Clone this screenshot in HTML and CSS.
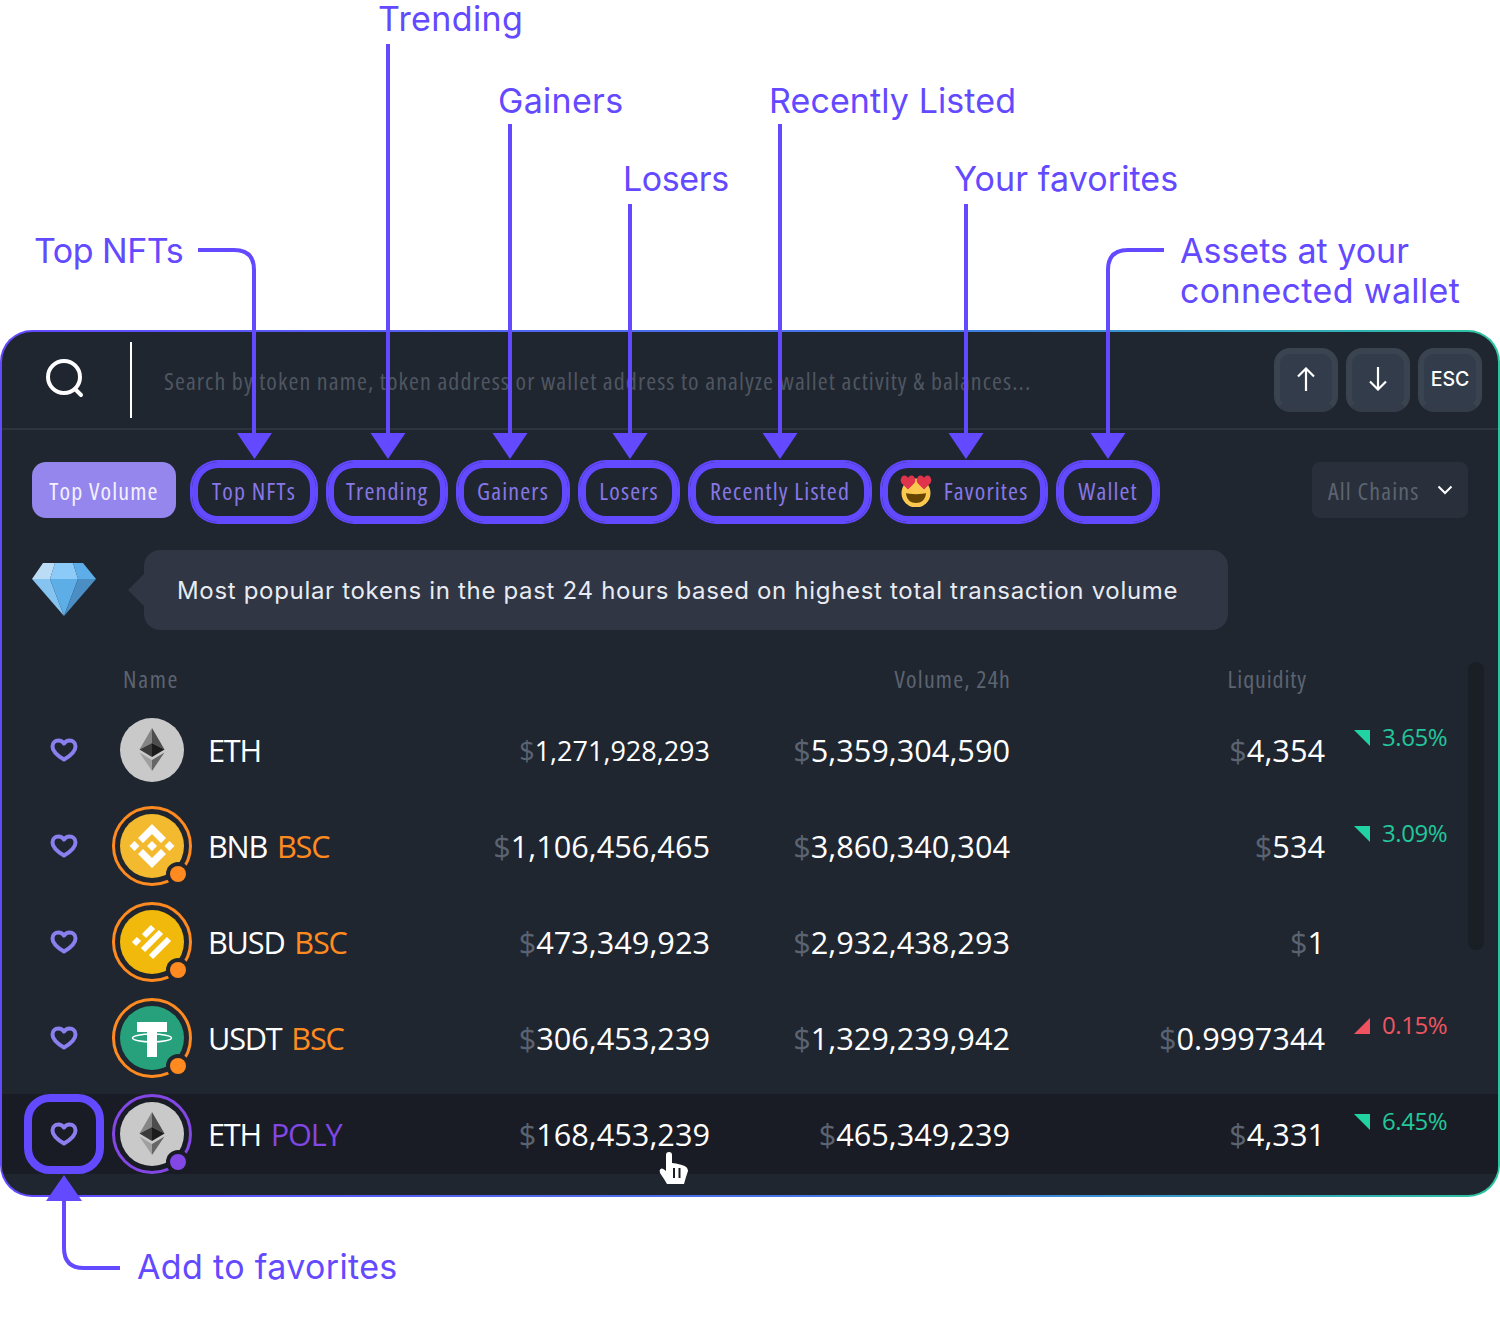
FILE: index.html
```html
<!doctype html>
<html>
<head>
<meta http-equiv="Content-Type" content="text/html; charset=utf-8"/>
<title>Token search</title>
<link rel="stylesheet" href="styles.css">
</head>
<body>

<svg class="defs" width="0" height="0">
	<symbol id="heart" viewBox="0 0 28 24">
		<path d="M14 21.500C8 18 2.500 14 2.500 8.500 2.500 5 5 2.500 8.500 2.500c2.300 0 4.200 1.100 5.500 3 1.300-1.900 3.200-3 5.500-3 3.500 0 6 2.500 6 6 0 5.500-5.500 9.500-11.500 13z" fill="none" stroke="#8b7eee" stroke-width="4" stroke-linejoin="round"/>
	</symbol>
	<symbol id="eth" viewBox="0 0 64 64">
		<circle cx="32" cy="32" r="32" fill="#c9c9c9"/>
		<path d="M32 10 19.500 31.500 32 25z" fill="#858585"/>
		<path d="M32 10 44.500 31.500 32 25z" fill="#4d4d4d"/>
		<path d="M19.500 31.500 32 25v14z" fill="#3b3b3b"/>
		<path d="M44.500 31.500 32 25v14z" fill="#1b1b1b"/>
		<path d="M19.500 34.500 32 42v11z" fill="#a0a0a0"/>
		<path d="M44.500 34.500 32 42v11z" fill="#666"/>
	</symbol>
</svg>

<div class="panel">
	<div class="search">
		<svg class="search-icon" width="40" height="40" viewBox="0 0 40 40"><circle cx="19" cy="18" r="16" fill="none" stroke="#fff" stroke-width="4"/><path d="M30 30l6 6" stroke="#fff" stroke-width="4" stroke-linecap="round"/></svg>
		<span class="caret"></span>
		<span class="placeholder">Search by token name, token address or wallet address to analyze wallet activity &amp; balances...</span>
		<div class="keys">
			<span class="key"><svg width="18" height="24" viewBox="0 0 18 24"><path d="M9 24V1.500M1 9.500 9 1.500l8 8" fill="none" stroke="#fff" stroke-width="2.200"/></svg></span>
			<span class="key"><svg width="18" height="24" viewBox="0 0 18 24"><path d="M9 0v22.500M1 14.500l8 8 8-8" fill="none" stroke="#fff" stroke-width="2.200"/></svg></span>
			<span class="key key-esc">ESC</span>
		</div>
	</div>

	<div class="tabs">
		<span class="tab tab-on">Top Volume</span>
		<span class="tab ring tab-nfts">Top NFTs</span>
		<span class="tab ring tab-trending">Trending</span>
		<span class="tab ring tab-gainers">Gainers</span>
		<span class="tab ring tab-losers">Losers</span>
		<span class="tab ring tab-recent">Recently Listed</span>
		<span class="tab ring tab-fav">
			<svg width="32" height="32" viewBox="0 0 32 32"><circle cx="16" cy="18" r="14.500" fill="#fbc94f"/><path d="M6 18c3 1.500 17 1.500 20 0-.5 7-5 10-10 10S6.500 25 6 18z" fill="#664500"/><path d="M8 14.500 1.500 8C-.500 5 1.500 .5 4.500 .5 6 .5 7.500 1.500 8 3c.5-1.500 2-2.500 3.500-2.500 3 0 5 4.500 3 7.500z" fill="#e0334c"/><path d="M24 14.500 17.500 8c-2-3 0-7.500 3-7.500 1.500 0 3 1 3.500 2.500.5-1.500 2-2.500 3.500-2.500 3 0 5 4.500 3 7.500z" fill="#e0334c"/></svg>
			Favorites
		</span>
		<span class="tab ring tab-wallet">Wallet</span>
		<span class="chains">All Chains
			<svg width="16" height="10" viewBox="0 0 16 10"><path d="M1.500 1.500 8 8l6.500-6.500" fill="none" stroke="#fff" stroke-width="2"/></svg>
		</span>
	</div>

	<div class="banner">
		<svg width="64" height="54" viewBox="0 0 64 54">
			<path d="M11 0h12l-5 16H0z" fill="#bbdcf5"/>
			<path d="M23 0h18l5 16H18z" fill="#8ccbf7"/>
			<path d="M41 0h10l13 16H46z" fill="#5daee8"/>
			<path d="M0 16h18l14 37z" fill="#85c4f0"/>
			<path d="M18 16h28L32 53z" fill="#5dade7"/>
			<path d="M46 16h18L32 53z" fill="#4a8ec4"/>
		</svg>
		<div class="bubble">Most popular tokens in the past 24 hours based on highest total transaction volume</div>
	</div>

	<div class="thead">
		<span class="th-name">Name</span>
		<span class="th-vol">Volume, 24h</span>
		<span class="th-liq">Liquidity</span>
	</div>

	<div class="row">
		<span class="fav"><svg width="28" height="24"><use href="#heart"/></svg></span>
		<span class="coin"><svg width="64" height="64"><use href="#eth"/></svg></span>
		<span class="name">ETH</span>
		<span class="num num-sm"><i>$</i>1,271,928,293</span>
		<span class="num"><i>$</i>5,359,304,590</span>
		<span class="num"><i>$</i>4,354</span>
		<span class="chg up"><b></b>3.65%</span>
	</div>
	<div class="row">
		<span class="fav"><svg width="28" height="24"><use href="#heart"/></svg></span>
		<span class="coin on-bsc"><svg width="64" height="64" viewBox="0 0 64 64"><circle cx="32" cy="32" r="32" fill="#f3ba2f"/><path d="M32 10 46 24 41 29 32 20 23 29 18 24zM32 54 46 40 41 35 32 44 23 35 18 40zM32 27 37 32 32 37 27 32zM9.500 32 14.500 27 19.500 32 14.500 37zM44.500 32 49.500 27 54.500 32 49.500 37z" fill="#fff"/></svg></span>
		<span class="name">BNB <em class="bsc">BSC</em></span>
		<span class="num"><i>$</i>1,106,456,465</span>
		<span class="num"><i>$</i>3,860,340,304</span>
		<span class="num"><i>$</i>534</span>
		<span class="chg up"><b></b>3.09%</span>
	</div>
	<div class="row">
		<span class="fav"><svg width="28" height="24"><use href="#heart"/></svg></span>
		<span class="coin on-bsc"><svg width="64" height="64" viewBox="0 0 64 64"><circle cx="32" cy="32" r="32" fill="#f0b90b"/><path d="M24 26l9-9M23 40l18-18M31 47l18-18M14 34l5-5" stroke="#fff" stroke-width="6" fill="none"/></svg></span>
		<span class="name">BUSD <em class="bsc">BSC</em></span>
		<span class="num"><i>$</i>473,349,923</span>
		<span class="num"><i>$</i>2,932,438,293</span>
		<span class="num"><i>$</i>1</span>
		<span class="chg"></span>
	</div>
	<div class="row">
		<span class="fav"><svg width="28" height="24"><use href="#heart"/></svg></span>
		<span class="coin on-bsc"><svg width="64" height="64" viewBox="0 0 64 64"><circle cx="32" cy="32" r="32" fill="#26a17b"/><path d="M17 16h30v10H37v25H27V26H17z" fill="#fff"/><ellipse cx="32" cy="32" rx="19.500" ry="4" fill="none" stroke="#fff" stroke-width="1.500"/></svg></span>
		<span class="name">USDT <em class="bsc">BSC</em></span>
		<span class="num"><i>$</i>306,453,239</span>
		<span class="num"><i>$</i>1,329,239,942</span>
		<span class="num"><i>$</i>0.9997344</span>
		<span class="chg down"><b></b>0.15%</span>
	</div>
	<div class="row row-hover">
		<span class="fav"><svg width="28" height="24"><use href="#heart"/></svg></span>
		<span class="coin on-poly"><svg width="64" height="64"><use href="#eth"/></svg></span>
		<span class="name">ETH <em class="poly">POLY</em></span>
		<span class="num"><i>$</i>168,453,239</span>
		<span class="num"><i>$</i>465,349,239</span>
		<span class="num"><i>$</i>4,331</span>
		<span class="chg up"><b></b>6.45%</span>
	</div>

	<span class="scrollbar"></span>
</div>

<!-- callouts drawn over the panel -->
<div class="notes">
	<svg class="lines" width="1500" height="1318" viewBox="0 0 1500 1318">
		<g fill="none" stroke="#6349ff" stroke-width="4">
			<path d="M198 250h36q20 0 20 20v165"/>
			<path d="M388 44v391"/>
			<path d="M510 124v311"/>
			<path d="M630 204v231"/>
			<path d="M780 124v311"/>
			<path d="M966 204v231"/>
			<path d="M1164 250h-36q-20 0-20 20v165"/>
			<path d="M64 1198v50q0 20 20 20h36"/>
		</g>
		<g fill="#6349ff">
			<path d="M237 433h35l-17.500 26z"/>
			<path d="M370.500 433h35L388 459z"/>
			<path d="M492.500 433h35L510 459z"/>
			<path d="M612.500 433h35L630 459z"/>
			<path d="M762.500 433h35L780 459z"/>
			<path d="M948.500 433h35L966 459z"/>
			<path d="M1090.500 433h35L1108 459z"/>
			<path d="M46 1201h36l-18-26z"/>
		</g>
		<rect x="28" y="1098" width="72" height="72" rx="22" fill="none" stroke="#6349ff" stroke-width="8"/>
		<path d="M666 1155a3 3 0 0 1 6 0v8l4 .5 6 1.500q6 1.500 6 6l-2 6-2 7h-17l-3-5-4-6q-1-3 .5-4 1.500-1 3.500.5l2 1.500z" fill="#fff"/>
		<path d="M674 1168v10M679.500 1168v10" stroke="#191c24" stroke-width="2"/>
	</svg>
	<span class="note n-trending">Trending</span>
	<span class="note n-gainers">Gainers</span>
	<span class="note n-recent">Recently Listed</span>
	<span class="note n-losers">Losers</span>
	<span class="note n-fav">Your favorites</span>
	<span class="note n-nfts">Top NFTs</span>
	<span class="note n-assets">Assets at your<br><span class="n-wide">connected wallet</span></span>
	<span class="note n-add">Add to favorites</span>
</div>

</body>
</html>
```

FILE: styles.css
```css
*{ margin:0; padding:0; box-sizing:border-box;}
body{ background:#fff; font-family:"Open Sans","Liberation Sans",sans-serif; font-stretch:75%; letter-spacing:1.15px; position:relative; width:1500px; height:1318px; overflow:hidden; padding-top:330px; color:#fff;}
i,em{ font-style:normal;}
.defs{ position:absolute;}

.panel{ position:relative; width:1500px; height:867px; border:2px solid transparent; border-radius:32px; background:linear-gradient(#1f2630,#1f2630) padding-box, linear-gradient(90deg,#6349ff,#3f7ee0 65%,#2cc4a0) border-box; overflow:hidden;}

.search{ display:flex; align-items:center; height:98px; padding-right:16px; border-bottom:2px solid #2d3440;}
.search-icon{ margin:0 0 2px 43px; flex:none;}
.caret{ width:2px; height:76px; background:#fff; margin-left:45px; flex:none;}
.placeholder{ margin-left:32px; font-size:24px; letter-spacing:1.070px; color:#4f5661; white-space:nowrap;}
.keys{ display:flex; gap:8px; margin-left:auto;}
.key{ width:64px; height:64px; padding-bottom:2px; border-radius:16px; background:#323c4a; border:6px solid #3a4350; border-bottom-color:#343c49; display:flex; align-items:center; justify-content:center;}
.key-esc{ font-family:"Inter",sans-serif; font-stretch:normal; letter-spacing:0; font-size:19.500px; font-weight:500;}

.tabs{ display:flex; align-items:flex-start; gap:12px; padding:32px 30px 0; height:88px;}
.tab{ height:60px; display:flex; align-items:center; justify-content:center; gap:12px; padding-bottom:3px; border-radius:26px; font-size:24px; color:#8777e8; flex:none;}
.ring{ box-shadow:0 0 0 2px #6349ff, inset 0 0 0 6px #6349ff;}
.tab-on{ width:144px; height:56px; padding:1px 0 0; margin-right:4px; background:#9586ee; color:#f3f1ff; border-radius:14px;}
.tab-nfts{ width:124px;}
.tab-trending{ width:118px;}
.tab-gainers{ width:110px;}
.tab-losers{ width:98px;}
.tab-recent{ width:180px;}
.tab-fav{ width:164px;}
.tab-wallet{ width:100px;}
.chains{ margin-left:auto; width:156px; height:56px; border-radius:8px; background:#2a303b; color:#5c6470; font-size:24px; display:flex; align-items:center; justify-content:space-between; padding:1px 15px 0 16px;}
.chains svg{ margin-top:-1px;}

.banner{ display:flex; align-items:center; padding:32px 0 0 30px;}
.bubble{ position:relative; margin-left:48px; width:1084px; height:80px; border-radius:16px; background:#303644; padding-left:33px; display:flex; align-items:center; font-family:"Inter",sans-serif; font-stretch:normal; font-size:24px; letter-spacing:.68px; color:#e8ebf2;}
.bubble:before{ content:""; position:absolute; left:-16px; top:24px; border:16px solid transparent; border-left:0; border-right-color:#303644;}

.thead{ height:80px; padding-top:16px; font-size:24px; color:#5c6470; display:grid; grid-template-columns:121px 888px 296px; align-items:center;}
.th-name{ grid-column:2 / 3; justify-self:start; grid-row:1; letter-spacing:1.700px;}
.th-vol{ grid-column:2 / 3; grid-row:1; justify-self:end;}
.th-liq{ grid-column:3 / 4; grid-row:1; justify-self:end; letter-spacing:.9px;}

.row{ display:grid; grid-template-columns:80px 104px 232px 270px 300px 315px 173px; height:80px; margin-bottom:16px; padding-left:22px; align-items:center; font-size:30.700px; font-stretch:100%; letter-spacing:0;}
.row:last-of-type{ margin-bottom:0;}
.row-hover{ background:#191c24;}
.fav{ display:flex; justify-content:center;}
.coin{ position:relative; width:80px; height:80px; margin-left:8px; border-radius:50%; display:flex; align-items:center; justify-content:center;}
.coin svg{ display:block;}
.on-bsc{ border:3px solid #ff8a1f; --dot:#ff8a1f;}
.on-poly{ border:3px solid #8247e5; --dot:#8247e5;}
.on-bsc:after,.on-poly:after{ content:""; position:absolute; right:3px; bottom:1px; width:16px; height:16px; border-radius:50%; background:var(--dot); box-shadow:0 0 0 4px #1f2630;}
.row-hover .on-poly:after{ box-shadow:0 0 0 4px #191c24;}
.name{ white-space:nowrap; letter-spacing:-1.200px;}
.bsc{ color:#ff8a1f; margin-left:3px;}
.poly{ color:#8247e5; margin-left:3px;}
.num{ text-align:right; white-space:nowrap;}
.num-sm{ font-size:27px;}
.num i{ color:#5b6370;}
.chg{ align-self:start; display:flex; padding:15px 0 0 29px; font-size:24px; line-height:24px; letter-spacing:-.4px; gap:12px;}
.chg b{ width:16px; height:16px; margin-top:5px;}
.up{ color:#22c79b;}
.up b{ background:#22d3a2; clip-path:polygon(0 0,100% 0,100% 100%);}
.down{ color:#ee5560;}
.down b{ background:#f0525f; clip-path:polygon(100% 0,100% 100%,0 100%);}

.scrollbar{ position:absolute; left:1466px; top:330px; width:16px; height:288px; border-radius:8px; background:#1a1e25;}

.notes{ position:absolute; left:0; top:0; width:1500px; height:1318px; pointer-events:none; font-family:"Inter",sans-serif; font-stretch:normal; letter-spacing:0;}
.lines{ position:absolute; left:0; top:0;}
.note{ position:absolute; font-size:34px; line-height:40px; color:#6349ff; white-space:nowrap;}
.n-trending{ left:378px; top:-1px; letter-spacing:.4px;}
.n-gainers{ left:498px; top:81px; letter-spacing:.3px;}
.n-recent{ left:769px; top:81px; letter-spacing:.1px;}
.n-losers{ left:623px; top:159px; letter-spacing:-.4px;}
.n-fav{ left:954px; top:159px; letter-spacing:.1px;}
.n-nfts{ left:34px; top:231px; letter-spacing:-.5px;}
.n-assets{ left:1180px; top:231px;}
.n-wide{ letter-spacing:.35px;}
.n-add{ left:137px; top:1247px; letter-spacing:.35px;}
```
